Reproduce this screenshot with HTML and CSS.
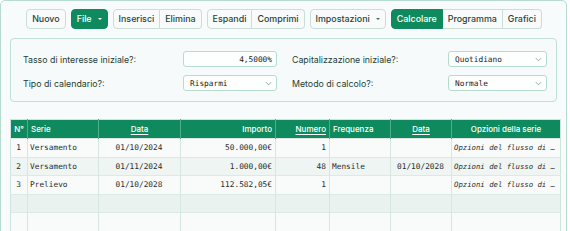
FILE: index.html
```html
<!DOCTYPE html>
<html lang="it">
<head>
<meta charset="utf-8">
<title>Calcolatore</title>
<link rel="stylesheet" href="styles.css">
</head>
<body>
<div class="card">
  <div class="toolbar">
    <button class="btn">Nuovo</button>
    <button class="btn primary">File <span class="caret"></span></button>
    <div class="group">
      <button class="btn">Inserisci</button>
      <button class="btn">Elimina</button>
    </div>
    <div class="group">
      <button class="btn">Espandi</button>
      <button class="btn">Comprimi</button>
    </div>
    <button class="btn">Impostazioni <span class="caret dark"></span></button>
    <div class="group">
      <button class="btn primary">Calcolare</button>
      <button class="btn">Programma</button>
      <button class="btn">Grafici</button>
    </div>
  </div>

  <div class="settings">
    <label class="lbl">Tasso di interesse iniziale?:</label>
    <div class="field input">4,5000%</div>
    <span></span>
    <label class="lbl">Capitalizzazione iniziale?:</label>
    <div class="field select">Quotidiano<svg class="chev" viewBox="0 0 8 5"><path d="M1 1l3 3 3-3"/></svg></div>

    <label class="lbl">Tipo di calendario?:</label>
    <div class="field select">Risparmi<svg class="chev" viewBox="0 0 8 5"><path d="M1 1l3 3 3-3"/></svg></div>
    <span></span>
    <label class="lbl">Metodo di calcolo?:</label>
    <div class="field select">Normale<svg class="chev" viewBox="0 0 8 5"><path d="M1 1l3 3 3-3"/></svg></div>
  </div>

  <table class="grid">
    <colgroup>
      <col class="c-n"><col class="c-serie"><col class="c-data"><col class="c-imp"><col class="c-num"><col class="c-freq"><col class="c-data2"><col class="c-opz">
    </colgroup>
    <thead>
      <tr>
        <th class="center">N°</th>
        <th class="left">Serie</th>
        <th class="center"><u>Data</u></th>
        <th class="right">Importo</th>
        <th class="right"><u>Numero</u></th>
        <th class="left">Frequenza</th>
        <th class="center"><u>Data</u></th>
        <th class="center">Opzioni della serie</th>
      </tr>
    </thead>
    <tbody>
      <tr>
        <td class="center">1</td><td>Versamento</td><td class="center">01/10/2024</td><td class="right">50.000,00€</td><td class="right">1</td><td></td><td class="center"></td><td class="opz">Opzioni del flusso di …</td>
      </tr>
      <tr>
        <td class="center">2</td><td>Versamento</td><td class="center">01/11/2024</td><td class="right">1.000,00€</td><td class="right">48</td><td>Mensile</td><td class="center">01/10/2028</td><td class="opz">Opzioni del flusso di …</td>
      </tr>
      <tr>
        <td class="center">3</td><td>Prelievo</td><td class="center">01/10/2028</td><td class="right">112.582,05€</td><td class="right">1</td><td></td><td class="center"></td><td class="opz">Opzioni del flusso di …</td>
      </tr>
      <tr><td></td><td></td><td></td><td></td><td></td><td></td><td></td><td></td></tr>
      <tr><td></td><td></td><td></td><td></td><td></td><td></td><td></td><td></td></tr>
      <tr><td></td><td></td><td></td><td></td><td></td><td></td><td></td><td></td></tr>
    </tbody>
  </table>
</div>
</body>
</html>
```

FILE: styles.css
```css
* { box-sizing: border-box; }
html, body { margin: 0; padding: 0; background: #ffffff; }
body { font-family: Inter, "Noto Sans", sans-serif; color: #1d3b31; }

.card {
  width: 567px;
  height: 260px;
  border: 1.5px solid #b7dccf;
  border-radius: 5px;
  background: #f8fbfb;
  padding: 8px 9px 0 9px;
}

.toolbar {
  display: flex;
  justify-content: center;
  gap: 5px;
  height: 20px;
  margin-left: 1px;
}
.group { display: flex; }
.group .btn { border-radius: 0; }
.group .btn + .btn { border-left: none; }
.group .btn:first-child { border-radius: 4px 0 0 4px; }
.group .btn:last-child { border-radius: 0 4px 4px 0; }

.btn {
  height: 20px;
  padding: 0 5px;
  border: 1px solid #c9ded7;
  border-radius: 4px;
  background: #f9fbfb;
  color: #24443a;
  font-family: Inter, sans-serif;
  font-size: 8.9px;
  font-weight: 500;
  display: flex;
  align-items: center;
  gap: 5px;
  line-height: 1;
}
.btn.primary {
  background: #0f8a5e;
  border-color: #0f8a5e;
  color: #ffffff;
}
.caret {
  width: 0; height: 0;
  border-left: 2px solid transparent;
  border-right: 2px solid transparent;
  border-top: 2.5px solid #ffffff;
  margin-left: 1px;
}
.caret.dark { border-top-color: #4c6a60; }

.settings {
  margin-top: 9px;
  border: 1px solid #bfe0d4;
  border-radius: 4px;
  background: #f7fafa;
  padding: 12px 12px 10px 12px;
  display: grid;
  grid-template-columns: 160px 94px 15px 156px 99px;
  grid-auto-rows: 16px;
  row-gap: 8px;
  align-items: center;
}
.lbl { font-size: 8.8px; color: #243f36; }
.field {
  height: 16px;
  border: 1px solid #b6dccd;
  border-radius: 3px;
  background: #fdfefe;
  font-family: "DejaVu Sans Mono", monospace;
  font-size: 7.8px;
  color: #222;
  display: flex;
  align-items: center;
  padding: 0 4px 0 6px;
}
.field.input { justify-content: flex-end; }
.field.select { justify-content: space-between; }
.chev { width: 7px; height: 5px; fill: none; stroke: #8a9a95; stroke-width: 1; }

.grid {
  margin-top: 17px;
  width: 550px;
  border-collapse: collapse;
  table-layout: fixed;
  border: 1px solid #cfe3dc;
}
.c-n { width: 17px; }
.c-serie { width: 71px; }
.c-data { width: 82px; }
.c-imp { width: 95px; }
.c-num { width: 54px; }
.c-freq { width: 61px; }
.c-data2 { width: 61px; }
.c-opz { width: 109px; }

th {
  background: #0f8a5e;
  color: #ffffff;
  font-weight: 500;
  font-size: 8px;
  height: 19px;
  padding: 0 3px;
  border-left: 1px solid #4fae89;
  white-space: nowrap;
}
th:first-child { border-left: none; padding: 0 1px; }
th u { text-underline-offset: 1.5px; text-decoration-thickness: 1px; }

td {
  height: 18.5px;
  padding: 0 3px 0 2px;
  font-family: "DejaVu Sans Mono", monospace;
  font-size: 7.8px;
  color: #2b2b2b;
  border-left: 1px solid #d6e6e0;
  border-top: 1px solid #dce9e4;
  white-space: nowrap;
  overflow: hidden;
}
td:first-child { border-left: none; }
tbody tr:nth-child(odd) td { background: #f9fbfb; }
tbody tr:nth-child(even) td { background: #eef5f2; }
tbody tr:nth-child(4) td { background: #e9f2ef; }

.center { text-align: center; }
.left { text-align: left; }
.right { text-align: right; }
.opz { font-style: italic; font-size: 7.3px; padding: 0 1px 0 2px; }
```
